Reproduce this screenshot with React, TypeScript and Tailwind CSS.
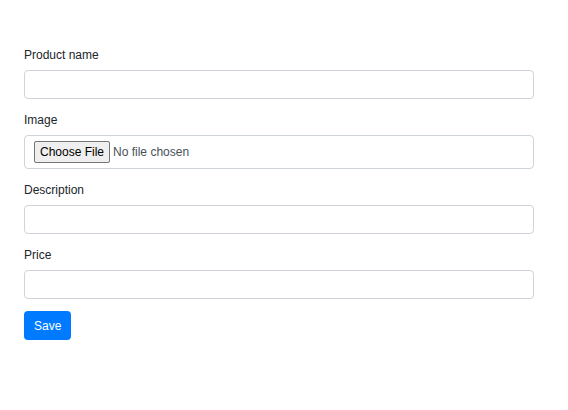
export default function App() {
  return (
    <div className="min-h-screen bg-white pt-[45px] px-6 text-[#212529] font-['Liberation_Sans',Arial,sans-serif] text-[12px]">
      <form className="w-[510px]" onSubmit={(e) => e.preventDefault()}>
        <Field label="Product name">
          <input type="text" className="block w-full h-[29px] px-2 border border-[#ced4da] rounded-[4px] outline-none" />
        </Field>
        <Field label="Image">
          <div className="h-[34px] border border-[#ced4da] rounded-[4px] flex items-center px-[9px]">
            <input
              type="file"
              className="text-[12px] text-[#495057] font-['Liberation_Sans',Arial,sans-serif] file:h-[22px] file:px-[5px] file:mr-[3px] file:bg-[#efefef] file:text-black file:border file:border-solid file:border-[#767676] file:rounded-[2px] file:font-['Liberation_Sans',Arial,sans-serif] file:text-[12px]"
            />
          </div>
        </Field>
        <Field label="Description">
          <input type="text" className="block w-full h-[29px] px-2 border border-[#ced4da] rounded-[4px] outline-none" />
        </Field>
        <Field label="Price">
          <input type="text" className="block w-full h-[29px] px-2 border border-[#ced4da] rounded-[4px] outline-none" />
        </Field>
        <button type="submit" className="mt-[1px] h-[29px] px-[10px] bg-[#007bff] text-white rounded-[4px]">
          Save
        </button>
      </form>
    </div>
  )
}

function Field({ label, children }) {
  return (
    <div className="mb-[11px]">
      <label className="block leading-[20px] mb-[5px]">{label}</label>
      {children}
    </div>
  )
}
